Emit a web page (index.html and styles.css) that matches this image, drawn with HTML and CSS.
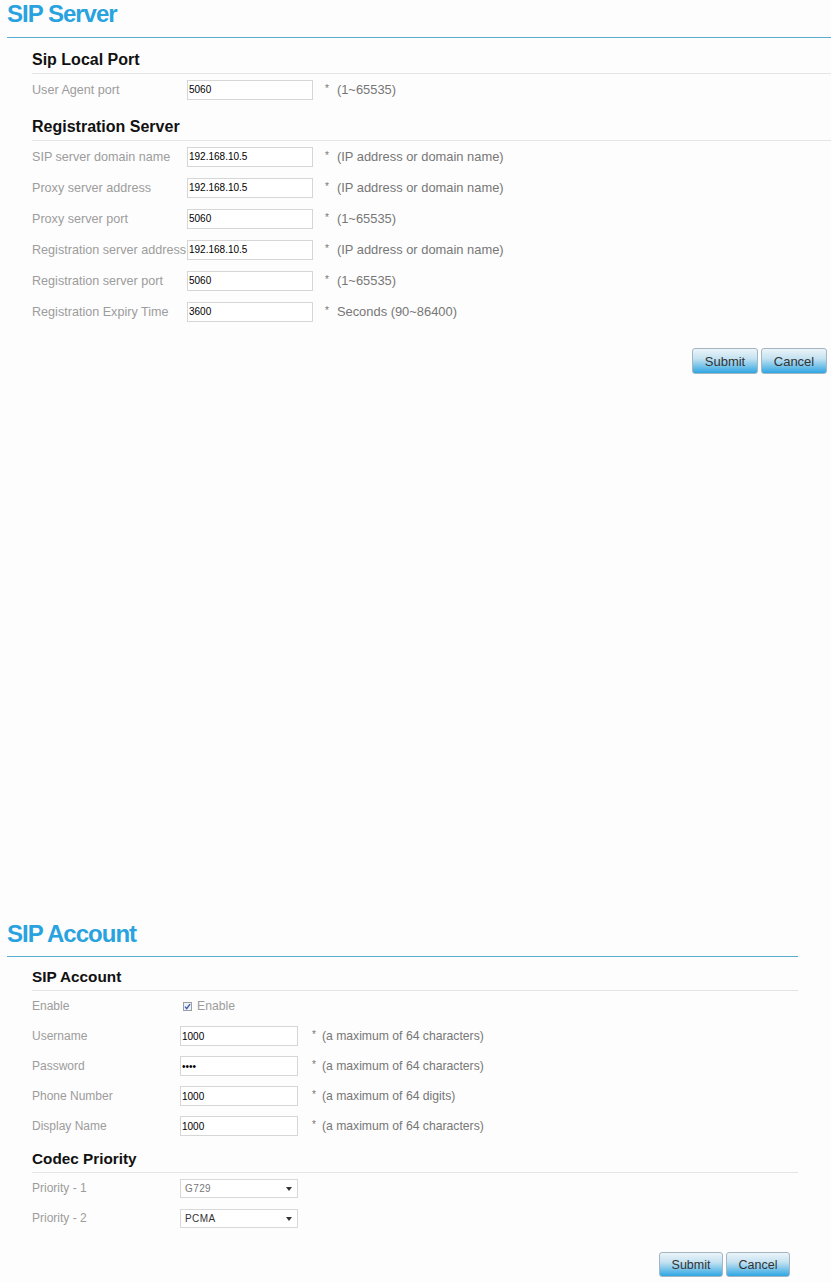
FILE: index.html
```html
<!DOCTYPE html>
<html lang="en">
<head>
  <meta charset="UTF-8">
  <title>SIP Settings</title>
  <link rel="stylesheet" href="styles.css">
</head>
<body>
  <!-- SIP Server -->
  <div class="panel panel-server">
    <h1 class="panel-title">SIP Server</h1>
    <div class="panel-body">
      <section class="group">
        <h2 class="group-title">Sip Local Port</h2>
        <div class="row">
          <label class="row-label">User Agent port</label>
          <input class="field" type="text" value="5060">
          <span class="req">*</span><span class="hint">(1~65535)</span>
        </div>
      </section>
      <section class="group">
        <h2 class="group-title">Registration Server</h2>
        <div class="row">
          <label class="row-label">SIP server domain name</label>
          <input class="field" type="text" value="192.168.10.5">
          <span class="req">*</span><span class="hint">(IP address or domain name)</span>
        </div>
        <div class="row">
          <label class="row-label">Proxy server address</label>
          <input class="field" type="text" value="192.168.10.5">
          <span class="req">*</span><span class="hint">(IP address or domain name)</span>
        </div>
        <div class="row">
          <label class="row-label">Proxy server port</label>
          <input class="field" type="text" value="5060">
          <span class="req">*</span><span class="hint">(1~65535)</span>
        </div>
        <div class="row">
          <label class="row-label">Registration server address</label>
          <input class="field" type="text" value="192.168.10.5">
          <span class="req">*</span><span class="hint">(IP address or domain name)</span>
        </div>
        <div class="row">
          <label class="row-label">Registration server port</label>
          <input class="field" type="text" value="5060">
          <span class="req">*</span><span class="hint">(1~65535)</span>
        </div>
        <div class="row">
          <label class="row-label">Registration Expiry Time</label>
          <input class="field" type="text" value="3600">
          <span class="req">*</span><span class="hint">Seconds (90~86400)</span>
        </div>
      </section>
      <div class="actions">
        <button class="btn">Submit</button>
        <button class="btn">Cancel</button>
      </div>
    </div>
  </div>

  <!-- SIP Account -->
  <div class="panel panel-account">
    <h1 class="panel-title">SIP Account</h1>
    <div class="panel-body">
      <section class="group">
        <h2 class="group-title">SIP Account</h2>
        <div class="row">
          <label class="row-label">Enable</label>
          <span class="check">
            <svg width="9" height="9" viewBox="0 0 9 9">
              <rect x="0.5" y="0.5" width="8" height="8" fill="#eef0f4" stroke="#9aa0aa"/>
              <path d="M2 4.6 L3.7 6.6 L7 2.2" fill="none" stroke="#3b5fb0" stroke-width="1.4"/>
            </svg>
            Enable
          </span>
        </div>
        <div class="row">
          <label class="row-label">Username</label>
          <input class="field" type="text" value="1000">
          <span class="req">*</span><span class="hint">(a maximum of 64 characters)</span>
        </div>
        <div class="row">
          <label class="row-label">Password</label>
          <input class="field" type="password" value="1000">
          <span class="req">*</span><span class="hint">(a maximum of 64 characters)</span>
        </div>
        <div class="row">
          <label class="row-label">Phone Number</label>
          <input class="field" type="text" value="1000">
          <span class="req">*</span><span class="hint">(a maximum of 64 digits)</span>
        </div>
        <div class="row">
          <label class="row-label">Display Name</label>
          <input class="field" type="text" value="1000">
          <span class="req">*</span><span class="hint">(a maximum of 64 characters)</span>
        </div>
      </section>
      <section class="group">
        <h2 class="group-title">Codec Priority</h2>
        <div class="row">
          <label class="row-label">Priority - 1</label>
          <div class="select muted"><span>G729</span></div>
        </div>
        <div class="row">
          <label class="row-label">Priority - 2</label>
          <div class="select"><span>PCMA</span></div>
        </div>
      </section>
      <div class="actions">
        <button class="btn">Submit</button>
        <button class="btn">Cancel</button>
      </div>
    </div>
  </div>
</body>
</html>
```

FILE: styles.css
```css
html, body {
  margin: 0;
  padding: 0;
  background: #fdfdfd;
  font-family: "Liberation Sans", Arial, sans-serif;
}
.panel {
  margin-left: 7px;
}
.panel-server {
  width: 824px;
}
.panel-account {
  width: 791px;
  margin-top: 546px;
}
.panel-title {
  margin: 0;
  padding-bottom: 9px;
  border-bottom: 1px solid #5aaed0;
  font-size: 24px;
  line-height: 28px;
  letter-spacing: -1px;
  font-weight: bold;
  color: #28a3df;
}
.panel-body {
  padding-left: 25px;
}
.group-title {
  margin: 0;
  padding: 12px 0 3px;
  border-bottom: 1px solid #e4e4e4;
  font-size: 16px;
  line-height: 20px;
  color: #111;
}
.row {
  display: flex;
  align-items: center;
  height: 31px;
}
.row-label {
  width: 155px;
  flex: none;
  font-size: 12.6px;
  color: #9c9c9c;
  white-space: nowrap;
}
.field {
  box-sizing: border-box;
  width: 126px;
  height: 20px;
  margin: 0;
  padding: 0 2px 0 1px;
  border: 1px solid #d6d6d6;
  background: #fff;
  font: 10px "Liberation Sans", Arial, sans-serif;
  color: #000;
  outline: none;
}
.req {
  margin-left: 12px;
  padding-bottom: 3px;
  font-size: 10px;
  color: #777;
}
.hint {
  margin-left: 8px;
  font-size: 12.9px;
  color: #777;
  white-space: nowrap;
}
.actions {
  display: flex;
  justify-content: flex-end;
  gap: 3px;
  margin-top: 21px;
  padding-right: 4px;
}
.btn {
  box-sizing: border-box;
  width: 66px;
  height: 26px;
  padding: 0;
  border: 1px solid #a3b6c2;
  border-radius: 3px;
  background: linear-gradient(to bottom, #ecf4f8 0%, #c4e2f1 40%, #2fa6e3 100%);
  font: 13px "Liberation Sans", Arial, sans-serif;
  color: #333;
}

/* account panel is a touch smaller */
.panel-account .panel-title {
  padding-bottom: 8px;
}
.panel-account .group-title {
  padding-top: 10px;
  font-size: 15.3px;
}
.panel-account .group + .group .group-title {
  padding-top: 8px;
}
.panel-account .row {
  height: 30px;
}
.panel-account .row-label {
  width: 148px;
  font-size: 12px;
}
.panel-account .field {
  width: 118px;
  height: 20px;
}
.panel-account .req {
  margin-left: 14px;
}
.panel-account .hint {
  margin-left: 6px;
  font-size: 12.2px;
}
.panel-account .actions {
  margin-top: 19px;
  padding-right: 8px;
}
.panel-account .btn {
  width: 64px;
  height: 25px;
  font-size: 12.5px;
}
.check {
  display: flex;
  align-items: center;
  gap: 5px;
  margin-left: 3px;
  font-size: 12.2px;
  color: #9c9c9c;
}
.select {
  box-sizing: border-box;
  width: 118px;
  height: 19px;
  position: relative;
  display: flex;
  align-items: center;
  padding-left: 4px;
  border: 1px solid #d8d8d8;
  background: #fff;
  font-size: 10px;
  letter-spacing: 0.4px;
  color: #333;
}
.select.muted {
  color: #777;
}
.select::after {
  content: "";
  position: absolute;
  right: 5px;
  top: 7px;
  border-left: 3px solid transparent;
  border-right: 3px solid transparent;
  border-top: 4px solid #333;
}
```
